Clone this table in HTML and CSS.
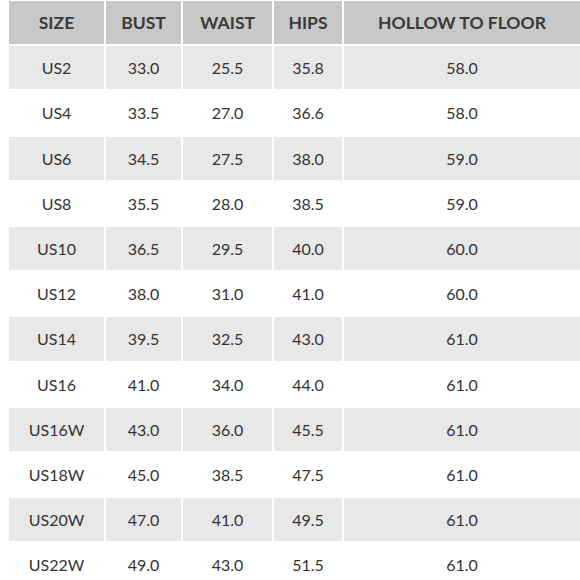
FILE: index.html
```html
<!DOCTYPE html>
<html>
<head>
<meta charset="utf-8">
<link rel="stylesheet" href="styles.css">
</head>
<body>
<table class="size-chart">
  <colgroup>
    <col class="c-size"><col class="c-bust"><col class="c-waist"><col class="c-hips"><col class="c-hollow">
  </colgroup>
  <thead>
    <tr><th>SIZE</th><th>BUST</th><th>WAIST</th><th>HIPS</th><th>HOLLOW TO FLOOR</th></tr>
  </thead>
  <tbody>
    <tr><td>US2</td><td>33.0</td><td>25.5</td><td>35.8</td><td>58.0</td></tr>
    <tr><td>US4</td><td>33.5</td><td>27.0</td><td>36.6</td><td>58.0</td></tr>
    <tr><td>US6</td><td>34.5</td><td>27.5</td><td>38.0</td><td>59.0</td></tr>
    <tr><td>US8</td><td>35.5</td><td>28.0</td><td>38.5</td><td>59.0</td></tr>
    <tr><td>US10</td><td>36.5</td><td>29.5</td><td>40.0</td><td>60.0</td></tr>
    <tr><td>US12</td><td>38.0</td><td>31.0</td><td>41.0</td><td>60.0</td></tr>
    <tr><td>US14</td><td>39.5</td><td>32.5</td><td>43.0</td><td>61.0</td></tr>
    <tr><td>US16</td><td>41.0</td><td>34.0</td><td>44.0</td><td>61.0</td></tr>
    <tr><td>US16W</td><td>43.0</td><td>36.0</td><td>45.5</td><td>61.0</td></tr>
    <tr><td>US18W</td><td>45.0</td><td>38.5</td><td>47.5</td><td>61.0</td></tr>
    <tr><td>US20W</td><td>47.0</td><td>41.0</td><td>49.5</td><td>61.0</td></tr>
    <tr><td>US22W</td><td>49.0</td><td>43.0</td><td>51.5</td><td>61.0</td></tr>
  </tbody>
</table>
</body>
</html>
```
FILE: styles.css
```css
html, body {
  margin: 0;
  padding: 0;
  background: #ffffff;
  overflow: hidden;
}
body {
  font-family: Lato, "Liberation Sans", sans-serif;
  color: #333333;
}
.size-chart {
  border-collapse: separate;
  border-spacing: 2px;
  margin: -1px 0 0 7px;
  table-layout: fixed;
  width: 575px;
}
.c-size { width: 95px; }
.c-bust { width: 75px; }
.c-waist { width: 89px; }
.c-hips { width: 68px; }
.c-hollow { width: 236px; }
.size-chart th,
.size-chart td {
  padding: 0;
  height: 43.2px;
  text-align: center;
  vertical-align: middle;
  white-space: nowrap;
}
.size-chart th {
  background: #c8c8c8;
  color: #3a3a3a;
  font-weight: 700;
  font-size: 17.5px;
}
.size-chart td {
  font-size: 16px;
  font-weight: 400;
  color: #333333;
}
.size-chart tbody tr:nth-child(odd) td {
  background: #e8e8e8;
}
```
